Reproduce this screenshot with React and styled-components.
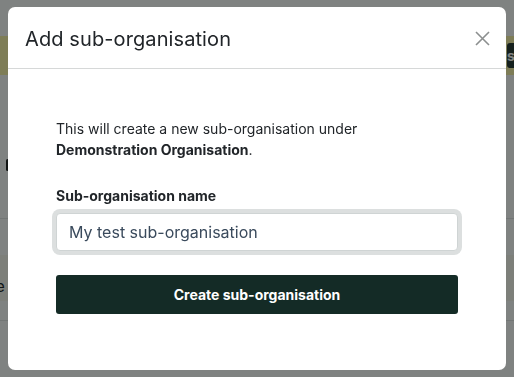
import React from "react";
import styled, { createGlobalStyle } from "styled-components";

const Global = createGlobalStyle`
  html, body { margin: 0; padding: 0; }
  body {
    font-family: Inter, "Noto Sans", "Liberation Sans", sans-serif;
    width: 514px; height: 377px; overflow: hidden;
    background: #ffffff;
  }
  * { box-sizing: border-box; }
`;

const Page = styled.div`
  width: 514px;
  height: 377px;
  display: flex;
  flex-direction: column;
  background: #ffffff;
  position: relative;
  overflow: hidden;
`;

const Band = styled.div`
  height: ${(p) => p.$h}px;
  flex: none;
  background: ${(p) => p.$bg || "#ffffff"};
  border-bottom: ${(p) => (p.$line ? "1px solid #e4e6e6" : "none")};
  display: flex;
  align-items: center;
  font-size: 14px;
  color: #212529;
`;

const BannerButton = styled.div`
  margin-left: auto;
  margin-right: -33px;
  height: 25px;
  width: 40px;
  background: #2b3a36;
  color: #fff;
  font-weight: 700;
  font-size: 14px;
  display: flex;
  align-items: center;
  padding-left: 0;
  border-radius: 3px;
`;

const Mark = styled.div`
  width: 3px;
  height: 12px;
  margin-left: 6px;
  background: #222;
  border-radius: 2px;
`;

const EdgeText = styled.span`
  margin-left: -4px;
  margin-top: 16px;
  font-size: 15px;
`;

const BottomButton = styled.div`
  margin-left: 365px;
  margin-top: 4px;
  width: 52px;
  height: 20px;
  background: #f3e9a6;
  border-radius: 4px;
`;

const Overlay = styled.div`
  position: fixed;
  inset: 0;
  background: rgba(0, 6, 4, 0.5);
  display: flex;
  align-items: center;
  justify-content: center;
`;

const Modal = styled.div`
  width: 498px;
  height: 363px;
  background: #ffffff;
  border-radius: 7px;
  display: flex;
  flex-direction: column;
  overflow: hidden;
`;

const Header = styled.div`
  height: 62px;
  flex: none;
  display: flex;
  align-items: center;
  justify-content: space-between;
  padding: 0 16px 0 17px;
  border-bottom: 1px solid #d6d8d8;
`;

const Title = styled.h2`
  margin: 0;
  font-size: 20px;
  font-weight: 400;
  color: #212529;
  letter-spacing: 0.1px;
  padding-top: 2px;
`;

const Close = styled.button`
  border: 0;
  background: none;
  padding: 0;
  width: 16px;
  height: 16px;
  display: flex;
  align-items: center;
  justify-content: center;
  cursor: pointer;
  margin-top: 2px;
`;

const Body = styled.div`
  padding: 49px 48px 0 48px;
  display: flex;
  flex-direction: column;
`;

const Intro = styled.p`
  margin: 0;
  font-size: 14px;
  line-height: 21px;
  color: #212529;
`;

const Label = styled.label`
  margin-top: 25px;
  font-size: 14px;
  line-height: 21px;
  font-weight: 700;
  color: #212529;
`;

const Input = styled.input`
  margin-top: 7px;
  height: 38px;
  width: 100%;
  border: 1px solid #cfd4d4;
  border-radius: 4px;
  box-shadow: 0 0 0 4px #dcdfdf;
  padding: 0 12px;
  font-family: inherit;
  font-size: 16px;
  color: #3a4a5c;
  outline: none;
  background: #fff;
`;

const Submit = styled.button`
  margin-top: 24px;
  height: 39px;
  width: 100%;
  border: 0;
  border-radius: 3px;
  background: #142b26;
  color: #ffffff;
  font-family: inherit;
  font-size: 14px;
  font-weight: 700;
  cursor: pointer;
`;

export default function App() {
  return (
    <>
      <Global />
      <Page>
        <Band $h={36} />
        <Band $h={39} $bg="#fdf5ab">
          <BannerButton>sh</BannerButton>
        </Band>
        <Band $h={80} />
        <Band $h={20}>
          <Mark />
        </Band>
        <Band $h={44} $line />
        <Band $h={36} />
        <Band $h={46} $bg="#fbf9f1">
          <EdgeText>e</EdgeText>
        </Band>
        <Band $h={20} $line />
        <Band $h={56}>
          <BottomButton />
        </Band>
        <Overlay>
          <Modal role="dialog">
            <Header>
              <Title>Add sub-organisation</Title>
              <Close aria-label="Close">
                <svg width="15" height="15" viewBox="0 0 15 15">
                  <path d="M1 1L14 14M14 1L1 14" stroke="#8c8f8f" strokeWidth="1.6" />
                </svg>
              </Close>
            </Header>
            <Body>
              <Intro>
                This will create a new sub-organisation under
                <br />
                <strong>Demonstration Organisation</strong>.
              </Intro>
              <Label htmlFor="name">Sub-organisation name</Label>
              <Input id="name" defaultValue="My test sub-organisation" />
              <Submit>Create sub-organisation</Submit>
            </Body>
          </Modal>
        </Overlay>
      </Page>
    </>
  );
}
